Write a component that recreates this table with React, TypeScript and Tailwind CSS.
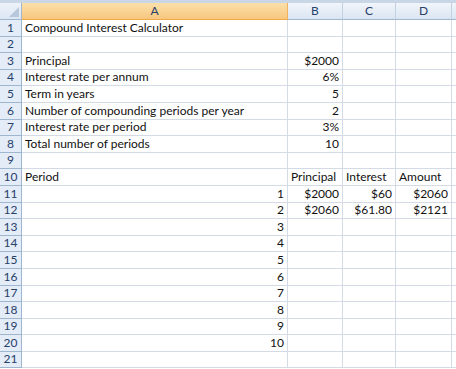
import React from "react";

type Cell = { t?: string; r?: boolean };

const rows: Cell[][] = [
  [{ t: "Compound Interest Calculator" }, {}, {}, {}],
  [{}, {}, {}, {}],
  [{ t: "Principal" }, { t: "$2000", r: true }, {}, {}],
  [{ t: "Interest rate per annum" }, { t: "6%", r: true }, {}, {}],
  [{ t: "Term in years" }, { t: "5", r: true }, {}, {}],
  [{ t: "Number of compounding periods per year" }, { t: "2", r: true }, {}, {}],
  [{ t: "Interest rate per period" }, { t: "3%", r: true }, {}, {}],
  [{ t: "Total number of periods" }, { t: "10", r: true }, {}, {}],
  [{}, {}, {}, {}],
  [{ t: "Period" }, { t: "Principal" }, { t: "Interest" }, { t: "Amount" }],
  [{ t: "1", r: true }, { t: "$2000", r: true }, { t: "$60", r: true }, { t: "$2060", r: true }],
  [{ t: "2", r: true }, { t: "$2060", r: true }, { t: "$61.80", r: true }, { t: "$2121", r: true }],
  [{ t: "3", r: true }, {}, {}, {}],
  [{ t: "4", r: true }, {}, {}, {}],
  [{ t: "5", r: true }, {}, {}, {}],
  [{ t: "6", r: true }, {}, {}, {}],
  [{ t: "7", r: true }, {}, {}, {}],
  [{ t: "8", r: true }, {}, {}, {}],
  [{ t: "9", r: true }, {}, {}, {}],
  [{ t: "10", r: true }, {}, {}, {}],
  [{}, {}, {}, {}],
];

const colW = ["w-[266px]", "w-[55px]", "w-[53px]", "w-[56px]"];
const letters = ["A", "B", "C", "D"];

export default function App() {
  return (
    <div
      className="w-[456px] h-[369px] overflow-hidden bg-white text-[12px] text-[#111]"
      style={{ fontFamily: "Lato, 'Open Sans', sans-serif" }}
    >
      <div className="h-[3px] bg-[#c9d6e6]" />
      <div className="flex h-[17px]">
        <div className="relative w-[22px] shrink-0 border-r border-b border-[#9eb6ce] bg-gradient-to-b from-[#eef3fa] to-[#dce6f3]">
          <svg className="absolute right-[2px] bottom-[2px]" width="10" height="10" viewBox="0 0 10 10">
            <polygon points="10,0 10,10 0,10" fill="#b8c8dc" />
          </svg>
        </div>
        {letters.map((l, i) => (
          <div
            key={l}
            className={`${colW[i]} shrink-0 flex items-center justify-center border-r border-b ${
              i === 0
                ? "border-[#f2b15a] bg-gradient-to-b from-[#fbe0a9] to-[#f7c77f] border-b-[#f2a94a]"
                : "border-[#c2d0e2] bg-gradient-to-b from-[#f1f5fb] to-[#dbe5f2] border-b-[#9eb6ce]"
            } text-[#27416b] leading-none`}
          >
            {l}
          </div>
        ))}
        <div className="flex-1 border-b border-[#9eb6ce] bg-gradient-to-b from-[#f1f5fb] to-[#dbe5f2]" />
      </div>
      {rows.map((row, ri) => (
        <div key={ri} className="flex h-[16.6px]">
          <div className="w-[22px] shrink-0 flex items-end justify-center border-r border-b border-[#9eb6ce] bg-[#e4ecf7] text-[#27416b] leading-none pb-[2px]">
            {ri + 1}
          </div>
          {row.map((c, ci) => (
            <div
              key={ci}
              className={`${colW[ci]} shrink-0 flex items-end border-r border-b border-[#d4dbe7] px-[3px] pb-[2px] leading-none whitespace-nowrap ${
                c.r ? "justify-end" : "justify-start"
              }`}
            >
              {c.t}
            </div>
          ))}
          <div className="flex-1 border-b border-[#d4dbe7]" />
        </div>
      ))}
    </div>
  );
}
